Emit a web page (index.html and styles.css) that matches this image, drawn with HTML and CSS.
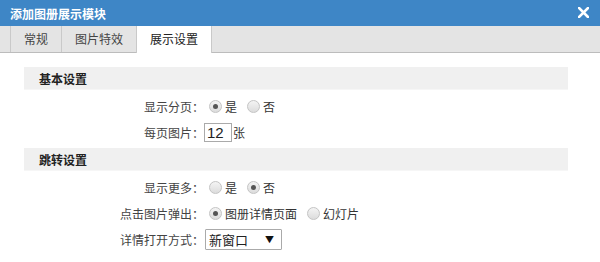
FILE: index.html
```html
<!DOCTYPE html>
<html lang="zh-CN">
  <head>
    <meta charset="UTF-8" />
    <meta name="viewport" content="width=device-width, initial-scale=1.0" />
    <title>添加图册展示模块</title>
    <link rel="stylesheet" href="styles.css">
  </head>
  <body>
    <div class="dialog">
      <div class="dialog_title">
        <span>添加图册展示模块</span>
        <span class="btn_close">
          <svg width="11" height="11" viewBox="0 0 11 11">
            <path d="M1 1 L10 10 M10 1 L1 10" stroke="#fff" stroke-width="2.6" stroke-linecap="square"/>
          </svg>
        </span>
      </div>
      <div class="tabs">
        <div class="tab">常规</div>
        <div class="tab">图片特效</div>
        <div class="tab active">展示设置</div>
      </div>
      <div class="content">
        <div class="section_title">基本设置</div>
        <div class="group">
          <div class="row">
            <label class="row_label">显示分页：</label>
            <label class="opt"><input type="radio" name="paging" checked>是</label>
            <label class="opt"><input type="radio" name="paging">否</label>
          </div>
          <div class="row">
            <label class="row_label" for="per_page">每页图片：</label>
            <input type="text" class="txt_num" id="per_page" value="12">张
          </div>
        </div>
        <div class="section_title">跳转设置</div>
        <div class="group">
          <div class="row">
            <label class="row_label">显示更多：</label>
            <label class="opt"><input type="radio" name="more">是</label>
            <label class="opt"><input type="radio" name="more" checked>否</label>
          </div>
          <div class="row">
            <label class="row_label">点击图片弹出：</label>
            <label class="opt"><input type="radio" name="popup" checked>图册详情页面</label>
            <label class="opt"><input type="radio" name="popup">幻灯片</label>
          </div>
          <div class="row">
            <label class="row_label" for="open_type">详情打开方式：</label>
            <span class="select_box">
              <select id="open_type">
                <option>新窗口</option>
                <option>当前窗口</option>
              </select>
            </span>
          </div>
        </div>
      </div>
    </div>
  </body>
</html>
```

FILE: styles.css
```css
*{
    margin: 0;
    padding: 0;
    box-sizing: border-box;
}
body{
    font-family: "Noto Sans CJK SC", "Noto Sans", sans-serif;
    font-size: 12px;
    color: #333;
    background-color: #fff;
}
.dialog_title{
    height: 26px;
    padding: 0 11px 0 10px;
    display: flex;
    align-items: center;
    justify-content: space-between;
    background-color: #3e86c6;
    color: #fff;
    font-weight: bold;
}
.btn_close{
    display: flex;
    margin-top: -1px;
}
.tabs{
    height: 27px;
    padding-left: 10px;
    display: flex;
    background-color: #e4e4e4;
    border-bottom: 1px solid #bcbcbc;
}
.tab{
    height: 26px;
    line-height: 26px;
    padding: 0 13px 0 13px;
    border-left: 1px solid #c9c9c9;
    color: #444;
}
.tab.active{
    height: 27px;
    background-color: #fff;
    border-right: 1px solid #c9c9c9;
    color: #222;
}
.content{
    padding: 14px 32px 0 24px;
}
.section_title{
    height: 23px;
    line-height: 23px;
    padding-left: 15px;
    background-color: #f0f0f0;
    border-bottom: 1px solid #f6f6f6;
    font-weight: bold;
    color: #222;
}
.group{
    padding: 3px 0;
}
.row{
    height: 26px;
    display: flex;
    align-items: center;
}
.row_label{
    width: 180px;
    text-align: right;
    color: #444;
}
.opt{
    display: flex;
    align-items: center;
    margin-right: 5px;
}
.opt input{
    appearance: none;
    width: 13px;
    height: 13px;
    margin: 0 3px 0 5px;
    border: 1px solid #c4c4c4;
    border-radius: 50%;
    background: linear-gradient(#f4f4f4, #dcdcdc);
    display: flex;
    align-items: center;
    justify-content: center;
}
.opt input:checked::after{
    content: "";
    width: 5px;
    height: 5px;
    border-radius: 50%;
    background-color: #555;
}
.txt_num{
    width: 28px;
    height: 19px;
    border: 1px solid #aaa;
    padding-left: 2px;
    font-family: "Liberation Sans", sans-serif;
    font-size: 15px;
    color: #222;
    margin-right: 1px;
}
.select_box{
    position: relative;
    display: flex;
    margin-left: 1px;
}
.select_box select{
    appearance: none;
    width: 77px;
    height: 21px;
    border: 1px solid #aaa;
    border-radius: 1px;
    background-color: #fff;
    padding-left: 3px;
    font-family: "Noto Sans CJK SC", sans-serif;
    font-size: 13px;
    color: #222;
}
.select_box::after{
    content: "▼";
    position: absolute;
    right: 8px;
    top: 4px;
    font-size: 9px;
    color: #111;
    pointer-events: none;
}
```
